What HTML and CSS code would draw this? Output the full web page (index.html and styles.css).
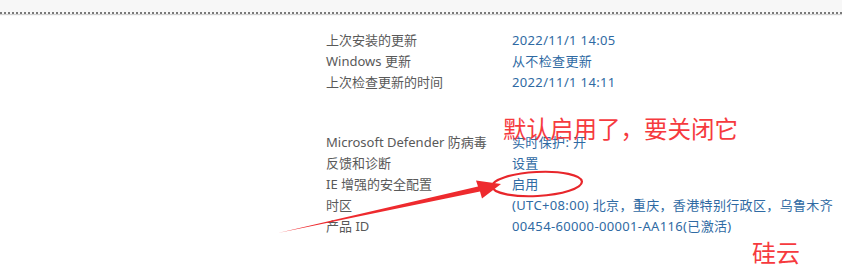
FILE: index.html
```html
<!DOCTYPE html>
<html lang="zh-CN">
<head>
<meta charset="utf-8">
<link rel="stylesheet" href="styles.css">
</head>
<body>
<div class="topbar"></div>
<div class="content">
  <div class="group">
    <div class="label">上次安装的更新</div><div class="value">2022/11/1 14:05</div>
    <div class="label">Windows 更新</div><div class="value">从不检查更新</div>
    <div class="label">上次检查更新的时间</div><div class="value">2022/11/1 14:11</div>
  </div>
  <div class="group group2">
    <div class="label">Microsoft Defender 防病毒</div><div class="value">实时保护: 开</div>
    <div class="label">反馈和诊断</div><div class="value">设置</div>
    <div class="label">IE 增强的安全配置</div><div class="value">启用</div>
    <div class="label">时区</div><div class="value">(UTC+08:00) 北京，重庆，香港特别行政区，乌鲁木齐</div>
    <div class="label">产品 ID</div><div class="value">00454-60000-00001-AA116(已激活)</div>
  </div>
</div>
<div class="note">默认启用了，要关闭它</div>
<div class="brand">硅云</div>
<svg class="overlay" width="842" height="279" viewBox="0 0 842 279">
  <ellipse cx="537" cy="184" rx="45" ry="12" transform="rotate(-3 537 184)" fill="none" stroke="#e8262b" stroke-width="2.2"/>
  <polygon points="278,233 478,186.5 476,180.5 501,184 482,198.5 480,191.5" fill="#ee2a2e"/>
</svg>
</body>
</html>
```
FILE: styles.css
```css
html, body {
  margin: 0;
  padding: 0;
  background: #ffffff;
}
body {
  width: 842px;
  height: 279px;
  overflow: hidden;
  position: relative;
  font-family: "Noto Sans", "Noto Sans CJK SC", sans-serif;
  font-size: 13px;
}
.topbar {
  height: 12px;
  background: #f7f7f7;
  border-bottom: 2px dotted #7a7a7a;
  box-shadow: 0 1px 1px #d0d0d0;
}
.content {
  padding: 16px 0 0 326px;
}
.group {
  display: grid;
  grid-template-columns: 186px auto;
  grid-auto-rows: 21px;
  line-height: 21px;
  white-space: nowrap;
}
.group2 {
  margin-top: 39px;
}
.label {
  color: #595959;
}
.value {
  color: #2f6aa3;
  letter-spacing: 0.35px;
}
.note {
  position: absolute;
  left: 503px;
  top: 113px;
  font-size: 23.5px;
  line-height: 30px;
  color: #f63a3e;
  font-family: "Noto Sans CJK SC", sans-serif;
}
.brand {
  position: absolute;
  left: 752px;
  top: 237px;
  font-size: 24px;
  line-height: 30px;
  color: #f63a3e;
  font-family: "Noto Sans CJK SC", sans-serif;
}
.overlay {
  position: absolute;
  left: 0;
  top: 0;
}
```
